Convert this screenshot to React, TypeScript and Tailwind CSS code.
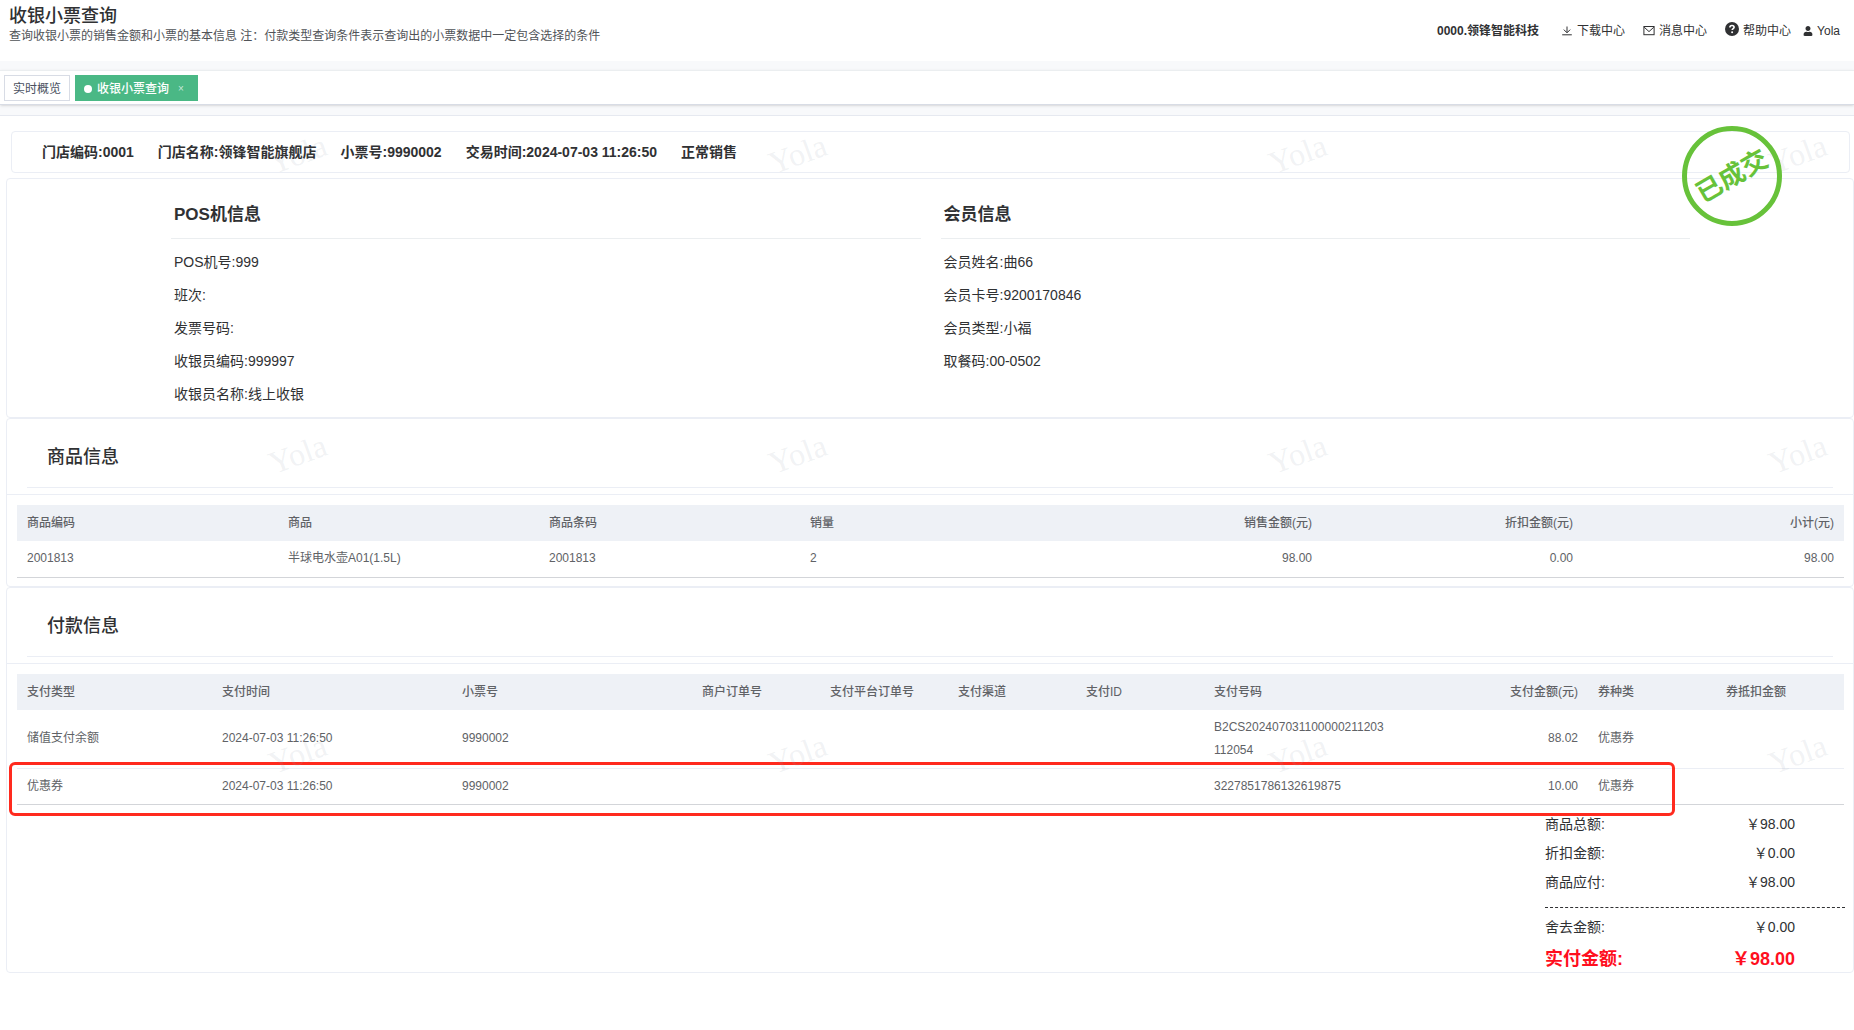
import React from 'react';
import clsx from 'clsx';
import { FaUser } from 'react-icons/fa';

interface Column {
  title: string;
  width: string;
  right?: boolean;
}

const RECEIPT_FIELDS = [
  '门店编码:0001',
  '门店名称:领锋智能旗舰店',
  '小票号:9990002',
  '交易时间:2024-07-03 11:26:50',
  '正常销售',
];

const POS_INFO = ['POS机号:999', '班次:', '发票号码:', '收银员编码:999997', '收银员名称:线上收银'];

const MEMBER_INFO = ['会员姓名:曲66', '会员卡号:9200170846', '会员类型:小福', '取餐码:00-0502'];

const GOODS_COLUMNS: Column[] = [
  { title: '商品编码', width: 'w-[261px]' },
  { title: '商品', width: 'w-[261px]' },
  { title: '商品条码', width: 'w-[261px]' },
  { title: '销量', width: 'w-[261px]' },
  { title: '销售金额(元)', width: 'w-[261px]', right: true },
  { title: '折扣金额(元)', width: 'w-[261px]', right: true },
  { title: '小计(元)', width: 'w-[261px]', right: true },
];

const GOODS_ROWS = [['2001813', '半球电水壶A01(1.5L)', '2001813', '2', '98.00', '0.00', '98.00']];

const PAY_COLUMNS: Column[] = [
  { title: '支付类型', width: 'w-[195px]' },
  { title: '支付时间', width: 'w-[240px]' },
  { title: '小票号', width: 'w-[240px]' },
  { title: '商户订单号', width: 'w-[128px]' },
  { title: '支付平台订单号', width: 'w-[128px]' },
  { title: '支付渠道', width: 'w-[128px]' },
  { title: '支付ID', width: 'w-[128px]' },
  { title: '支付号码', width: 'w-[192px]' },
  { title: '支付金额(元)', width: 'w-[192px]', right: true },
  { title: '券种类', width: 'w-[128px]' },
  { title: '券抵扣金额', width: 'w-[128px]' },
];

const PAY_ROWS = [
  ['储值支付余额', '2024-07-03 11:26:50', '9990002', '', '', '', '', 'B2CS202407031100000211203112054', '88.02', '优惠券', ''],
  ['优惠券', '2024-07-03 11:26:50', '9990002', '', '', '', '', '3227851786132619875', '10.00', '优惠券', ''],
];

const TOTALS = [
  { label: '商品总额:', value: '￥98.00' },
  { label: '折扣金额:', value: '￥0.00' },
  { label: '商品应付:', value: '￥98.00' },
];

const DownloadIcon: React.FC = () => (
  <svg viewBox="0 0 12 12" className="w-3 h-3" fill="none" stroke="currentColor" strokeWidth="1">
    <path d="M6 1.5v6M2.8 4.6 6 7.8l3.2-3.2M1.2 9.8h9.6" />
  </svg>
);

const MessageIcon: React.FC = () => (
  <svg viewBox="0 0 12 12" className="w-3 h-3" fill="none" stroke="currentColor" strokeWidth="1">
    <rect x="0.9" y="1.5" width="10.2" height="8.2" />
    <path d="m1.2 2.2 4.8 4.4 4.8-4.4" />
  </svg>
);

const HelpIcon: React.FC = () => (
  <svg viewBox="0 0 14 14" className="w-3.5 h-3.5 mb-1" fill="none">
    <circle cx="7" cy="7" r="7" fill="#303133" />
    <path d="M4.9 5.5C4.9 4.2 5.9 3.5 7 3.5s2.1.7 2.1 1.8c0 1.3-1.9 1.4-1.9 2.8" stroke="#fff" strokeWidth="1.6" />
    <circle cx="7.1" cy="10.3" r="1" fill="#fff" />
  </svg>
);

const Watermark: React.FC = () => (
  <div aria-hidden="true" className="absolute inset-0 overflow-hidden pointer-events-none select-none">
    {[0, 1, 2].map((row) => (
      <div key={row} className="flex h-[300px]">
        {[0, 1, 2, 3].map((col) => (
          <div key={col} className="w-[500px] shrink-0 pl-[268px] pt-5">
            <span className="inline-block -rotate-[20deg] font-['Liberation_Serif',serif] text-[32px] leading-9 text-gray-400/15">Yola</span>
          </div>
        ))}
      </div>
    ))}
  </div>
);

const InfoColumn: React.FC<{ title: string; items: string[] }> = ({ title, items }) => (
  <div>
    <h3 className="h-[60px] pl-[3px] pt-6 text-[17px] leading-6 font-bold border-b border-[#ebeef0]">{title}</h3>
    <ul className="pl-[3px] pt-[7px]">
      {items.map((item) => (
        <li key={item} className="h-[33px] leading-[33px]">{item}</li>
      ))}
    </ul>
  </div>
);

const DataTable: React.FC<{ columns: Column[]; rows: string[][]; label: string }> = ({ columns, rows, label }) => (
  <table aria-label={label} className="w-full table-fixed border-collapse text-xs text-[#606266]">
    <thead>
      <tr className="h-9 bg-[#eef1f6]">
        {columns.map((column) => (
          <th key={column.title} className={clsx('px-2.5 font-medium whitespace-nowrap', column.width, column.right ? 'text-right' : 'text-left')}>
            {column.title}
          </th>
        ))}
      </tr>
    </thead>
    <tbody>
      {rows.map((row, index) => (
        <tr key={index} className="h-9 border-b border-[#ebeef5] last:border-[#d3d5d9]">
          {row.map((cell, i) => (
            <td key={i} className={clsx('px-2.5 py-[6px] leading-[23px] break-all', columns[i].right ? 'text-right' : 'text-left')}>
              {cell}
            </td>
          ))}
        </tr>
      ))}
    </tbody>
  </table>
);

const SectionHeader: React.FC<{ title: string }> = ({ title }) => (
  <div className="h-[76px] px-5 border-b border-[#ebeef5]">
    <h2 className="h-[69px] pl-5 pt-6 text-lg leading-7 font-medium border-b border-[#ebeef5]">{title}</h2>
  </div>
);

const Card: React.FC<{ children: React.ReactNode }> = ({ children }) => (
  <section className="relative border border-[#ebeef5] rounded">{children}</section>
);

const App: React.FC = () => {
  return (
    <div className="min-h-screen bg-white text-sm text-[#303133] font-['Liberation_Sans','Noto_Sans_CJK_SC',sans-serif]">
      <header className="flex justify-between h-[61px] pl-[9px] pr-3.5">
        <div className="pt-[5px]">
          <h1 className="text-lg leading-[22px] font-medium">收银小票查询</h1>
          <p className="text-xs leading-[18px] text-[#505357]">
            查询收银小票的销售金额和小票的基本信息 注：付款类型查询条件表示查询出的小票数据中一定包含选择的条件
          </p>
        </div>
        <nav className="flex items-center text-xs">
          <strong className="mr-[22px]">0000.领锋智能科技</strong>
          <a href="#download" className="flex items-center gap-1 mr-[18px]"><DownloadIcon />下载中心</a>
          <a href="#message" className="flex items-center gap-1 mr-[18px]"><MessageIcon />消息中心</a>
          <a href="#help" className="flex items-center gap-1 mr-3"><HelpIcon />帮助中心</a>
          <a href="#user" className="flex items-center gap-1"><FaUser className="w-2.5 h-2.5" />Yola</a>
        </nav>
      </header>

      <div className="pt-[9px] pb-2.5 bg-[#f8f9fb] border-b border-[#e6e9f0]">
        <div className="flex h-[35px] pt-1 pl-1 gap-[5px] bg-white border-y border-t-[#ebeef0] border-b-[#d8dce5] shadow-sm">
          <a href="#overview" className="flex items-center h-[26px] px-2 pt-0.5 border border-[#d8dce5] text-xs text-[#495060]">实时概览</a>
          <div className="flex items-center h-[26px] px-[9px] pt-0.5 bg-[#4ab885] text-xs font-medium text-white">
            <span className="w-2 h-2 mr-[5px] rounded-full bg-white" />
            收银小票查询
            <button type="button" aria-label="关闭" className="w-4 ml-1 text-[10px] text-white/70">×</button>
          </div>
        </div>
      </div>

      <main className="relative pt-[15px] pl-[6px] overflow-hidden">
        <ul className="flex items-center gap-6 h-[42px] ml-[5px] mr-1 pl-[30px] border border-[#ebeef5] rounded font-bold">
          {RECEIPT_FIELDS.map((field) => (
            <li key={field}>{field}</li>
          ))}
        </ul>

        <div className="mt-[5px]">
          <Card>
            <div className="grid grid-cols-2 gap-5 h-[238px] ml-[164px] mr-[163px]">
              <InfoColumn title="POS机信息" items={POS_INFO} />
              <InfoColumn title="会员信息" items={MEMBER_INFO} />
            </div>
          </Card>

          <Card>
            <SectionHeader title="商品信息" />
            <div className="px-2.5 pt-2.5 pb-2">
              <DataTable label="商品信息" columns={GOODS_COLUMNS} rows={GOODS_ROWS} />
            </div>
          </Card>

          <Card>
            <SectionHeader title="付款信息" />
            <div className="pt-2.5 px-2.5">
              <DataTable label="付款信息" columns={PAY_COLUMNS} rows={PAY_ROWS} />
            </div>
            <div className="absolute left-[2px] right-[178px] top-[174px] h-[54px] border-3 border-[#ff2a1e] rounded-md" />
            <dl className="w-[300px] ml-auto mr-2 pt-[5px]">
              {TOTALS.map((total) => (
                <div key={total.label} className="flex justify-between h-[29px] leading-[29px] pr-[50px]">
                  <dt>{total.label}</dt>
                  <dd>{total.value}</dd>
                </div>
              ))}
              <div className="flex justify-between mt-[10px] pt-[5px] pr-[50px] leading-[29px] border-t border-dashed border-[#303133]">
                <dt>舍去金额:</dt>
                <dd>￥0.00</dd>
              </div>
              <div className="flex justify-between h-[30px] pr-[50px] text-lg leading-[34px] font-bold text-[#ff0f1e]">
                <dt>实付金额:</dt>
                <dd>￥98.00</dd>
              </div>
            </dl>
          </Card>
        </div>

        <Watermark />
        <div className="absolute right-[72px] top-[10px] flex items-center justify-center w-[100px] h-[100px] border-[5px] border-[#67c23a] rounded-full">
          <span className="-rotate-[30deg] text-[26px] leading-none font-bold whitespace-nowrap text-[#67c23a]">已成交</span>
        </div>
      </main>
    </div>
  );
};

export default App;
